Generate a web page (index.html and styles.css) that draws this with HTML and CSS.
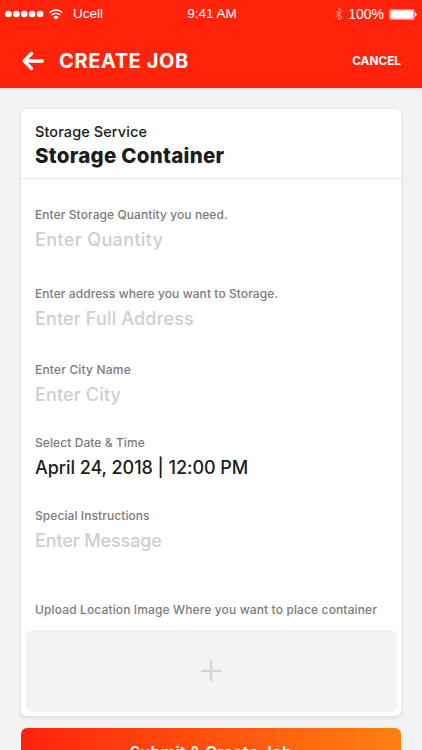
FILE: index.html
```
<!DOCTYPE html>
<html lang="en">
<head>
<meta charset="utf-8">
<title>Create Job</title>
<link rel="stylesheet" href="styles.css">
</head>
<body>
<header class="header">
  <div class="status">
    <div class="status-left">
      <svg width="39" height="8" viewBox="0 0 39 8" fill="#fff"><circle cx="3.5" cy="4" r="3.3"/><circle cx="11.4" cy="4" r="3.3"/><circle cx="19.3" cy="4" r="3.3"/><circle cx="27.2" cy="4" r="3.3"/><circle cx="35.1" cy="4" r="3.3"/></svg>
      <svg class="wifi" width="14" height="11" viewBox="0 0 14 11" fill="none" stroke="#fff" stroke-width="1.5"><path d="M.7 3.6a9 9 0 0 1 12.6 0M2.8 6a5.9 5.9 0 0 1 8.4 0"/><path d="M4.4 8a3.6 3.6 0 0 1 5.2 0L7 10.6z" fill="#fff" stroke="none"/></svg>
      <span class="carrier">Ucell</span>
    </div>
    <span class="time">9:41 AM</span>
    <div class="status-right">
      <svg class="bluetooth" width="8" height="14" viewBox="0 0 8 14" fill="none" stroke="#fff" stroke-width="1"><path d="M.5 3.8l6.6 6.3L4 13V1l3.1 2.9L.5 10.2"/></svg>
      <span class="percent">100%</span>
      <svg width="28" height="11" viewBox="0 0 28 11" fill="#fff"><rect x=".4" y=".4" width="25" height="10.2" rx="1.5" fill="none" stroke="#fff" stroke-width=".7" opacity=".75"/><rect x="1.3" y="1.3" width="23.2" height="8.4" rx=".7"/><path d="M26 3.5q1.7.3 1.7 2T26 7.5z"/></svg>
    </div>
  </div>
  <nav class="nav">
    <svg class="back" width="22" height="20" viewBox="0 0 22 20" fill="none" stroke="#fff" stroke-width="3.3" stroke-linecap="round" stroke-linejoin="round"><path d="M9.5 2.5L2.2 10l7.3 7.5M2.8 10h17.4"/></svg>
    <h1 class="title">CREATE JOB</h1>
    <span class="cancel">CANCEL</span>
  </nav>
</header>
<main class="content">
  <section class="card">
    <div class="card-head">
      <div class="service">Storage Service</div>
      <h2 class="product">Storage Container</h2>
    </div>
    <div class="fields">
      <div class="field quantity"><div class="label">Enter Storage Quantity you need.</div><div class="value">Enter Quantity</div></div>
      <div class="field address"><div class="label">Enter address where you want to Storage.</div><div class="value">Enter Full Address</div></div>
      <div class="field city"><div class="label">Enter City Name</div><div class="value">Enter City</div></div>
      <div class="field date"><div class="label">Select Date &amp; Time</div><div class="value filled">April 24, 2018 | 12:00 PM</div></div>
      <div class="field message"><div class="label">Special Instructions</div><div class="value">Enter Message</div></div>
      <div class="label upload-label">Upload Location Image Where you want to place container</div>
    </div>
    <div class="upload"><svg width="22" height="22" viewBox="0 0 22 22" stroke="#d5d5d5" stroke-width="2.4"><path d="M11 .8v20.4M.8 11h20.4"/></svg></div>
  </section>
  <div class="submit">Submit &amp; Create Job</div>
</main>
</body>
</html>
```
FILE: styles.css
```
* { box-sizing: border-box; }
html, body { height: 750px; overflow: hidden; }
body {
  margin: 0;
  background: #f3f3f3;
  font-family: Inter, "Open Sans", sans-serif;
  color: #1c1c1c;
  white-space: nowrap;
}
svg { display: block; flex: none; }
.header { height: 88px; background: #ff230c; color: #fff; box-shadow: 0 1px 3px rgba(0, 0, 0, .12); }
.status {
  height: 28px;
  padding: 0 5px;
  display: grid;
  grid-template-columns: 1fr auto 1fr;
  align-items: center;
  font: 13.5px/28px "Liberation Sans", sans-serif;
}
.status-left, .status-right { display: flex; align-items: center; }
.status-right { justify-content: flex-end; }
.wifi { margin-left: 5px; }
.carrier { margin-left: 10px; }
.time { padding-left: 2px; }
.bluetooth { opacity: .55; margin-right: 5px; }
.percent { margin-right: 5px; font-size: 14px; }
.nav { height: 60px; padding: 2px 21px 0 22px; display: flex; align-items: center; margin-top: 2px; }
.title { margin: 0 0 0 15px; font-size: 20px; line-height: 24px; font-weight: 700; letter-spacing: .6px; }
.cancel { margin-left: auto; font-size: 11.8px; line-height: 16px; font-weight: 700; }
.content { padding: 21px 21px 0; }
.card {
  height: 607px;
  background: #fff;
  border-radius: 6px;
  box-shadow: 0 1px 4px rgba(0, 0, 0, .12);
  display: flex;
  flex-direction: column;
}
.card-head { height: 70px; padding: 13px 14px 0; border-bottom: 1px solid #e8e8e8; }
.service { font-size: 14.5px; line-height: 20px; font-weight: 500; letter-spacing: .09px; }
.product { margin: 0; font-size: 20.5px; line-height: 28px; font-weight: 800; letter-spacing: .28px; }
.fields { padding: 26px 14px 0; }
.label { font-size: 12px; line-height: 20px; font-weight: 500; color: #7b7b7b; letter-spacing: .08px; }
.value { padding-top: 1px; font-size: 18px; line-height: 28px; font-weight: 500; color: #cecece; }
.filled { color: #1c1c1c; letter-spacing: -.05px; }
.quantity { margin-bottom: 30px; }
.quantity .value { letter-spacing: .37px; }
.address { margin-bottom: 27px; }
.address .value, .city .value { letter-spacing: .15px; }
.city { margin-bottom: 24px; }
.city .label { letter-spacing: .18px; }
.date { margin-bottom: 24px; }
.message { margin-bottom: 45px; }
.message .value { letter-spacing: -.12px; }
.upload-label { letter-spacing: .13px; }
.upload {
  height: 82px;
  margin: 10px 4.5px 0;
  border-radius: 6px;
  background: #f3f3f3;
  display: flex;
  align-items: center;
  justify-content: center;
}
.submit {
  height: 48px;
  margin-top: 12px;
  border-radius: 6px;
  background: linear-gradient(90deg, #ff230c, #ff8012);
  color: #fff;
  text-align: center;
  font-size: 16px;
  line-height: 48px;
  font-weight: 600;
  letter-spacing: .25px;
}
```
